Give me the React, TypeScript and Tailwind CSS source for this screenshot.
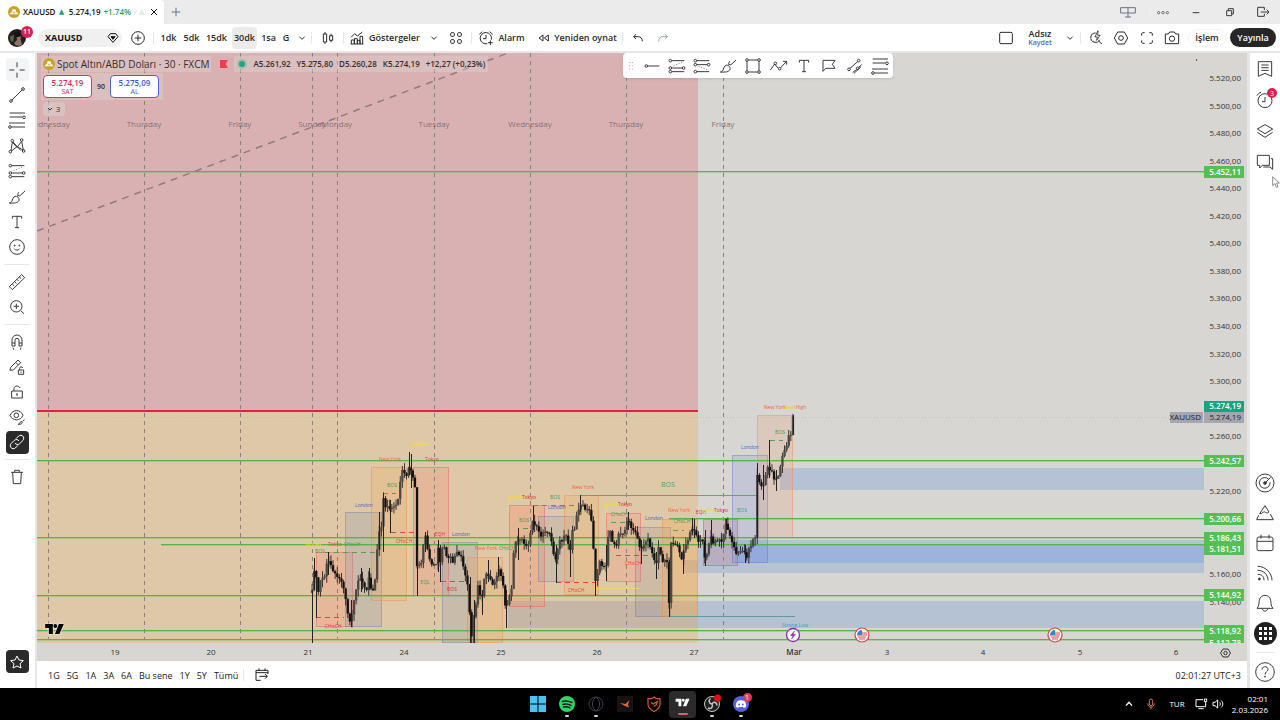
import type { ReactNode } from "react";

type Point = [number, number];

// every glyph is drawn around 0,0 on a 60 unit grid
const Icon = ({ children, className = "" }: { children: ReactNode; className?: string }) => (
  <svg
    viewBox="-30 -30 60 60"
    className={`w-5 h-5 shrink-0 overflow-visible ${className}`}
    fill="none"
    stroke="currentColor"
    strokeWidth="3"
    aria-hidden="true"
  >
    {children}
  </svg>
);

const Chevron = () => (
  <Icon><path d="M-8 -4 L0 4 L8 -4" /></Icon>
);

const FibIcon = () => (
  <Icon>
    <path d="M-22 -21H24M-22 -9H17M-24 9H24M-16 21H24" />
    <circle cx="21" cy="-8" r="4" fill="white" />
    <circle cx="-21" cy="21" r="4" fill="white" />
  </Icon>
);

const LongIcon = () => (
  <Icon>
    <path d="M-16 -16H22M-16 6H16M-16 17H22" />
    <path d="M-10 -1L18 -12" strokeDasharray="3 5" strokeWidth="2" />
    <circle cx="-20" cy="-16" r="4" />
    <circle cx="-20" cy="6" r="4" />
    <circle cx="20" cy="6" r="4" />
    <circle cx="-20" cy="17" r="4" />
  </Icon>
);

const ShortIcon = () => (
  <Icon>
    <path d="M-16 -16H22M-16 -4H16M-16 17H22" />
    <path d="M-10 1L18 12" strokeDasharray="3 5" strokeWidth="2" />
    <circle cx="-20" cy="-16" r="4" />
    <circle cx="-20" cy="-4" r="4" />
    <circle cx="20" cy="-4" r="4" />
    <circle cx="-20" cy="17" r="4" />
  </Icon>
);

const BrushIcon = () => (
  <Icon>
    <path d="M-23 18C-12 18 -16 2 -6 -2C1 -4 8 3 6 10C3 18 -8 19 -23 18Z" />
    <path d="M2 -4C2 -9 4 -14 6 -15M8 -3L24 -18M8 -4L3 -5" />
  </Icon>
);

const TextIcon = () => (
  <Icon>
    <path d="M-14 -10V-17H14V-10M0 -17V17M-6 17H6" />
  </Icon>
);

const TvLogo = ({ className }: { className: string }) => (
  <svg viewBox="0 0 36 22" className={className} fill="currentColor" aria-hidden="true">
    <path d="M0 2H14V20H7V9H0Z" />
    <circle cx="18.5" cy="5.5" r="3.5" />
    <path d="M25 2H34L26 20H18Z" />
  </svg>
);

const GoldIcon = ({ className = "" }: { className?: string }) => (
  <svg viewBox="0 0 36 36" className={`w-3 h-3 shrink-0 ${className}`} aria-hidden="true">
    <circle cx="18" cy="18" r="18" fill="#c9a227" />
    <path d="M14 10H22L25 17H11ZM9 19H16L18 25H5ZM20 19H27L31 25H18Z" fill="white" />
  </svg>
);

const Separator = () => <span className="w-px h-3 bg-gray-200 shrink-0" />;

const days: [number, string][] = [
  [48, "Wednesday"], [144, "Thursday"], [240, "Friday"], [312, "Sunday"], [337, "Monday"],
  [434, "Tuesday"], [530, "Wednesday"], [626, "Thursday"], [723, "Friday"],
];

const dates: [number, string][] = [
  [115, "19"], [211, "20"], [308, "21"], [404, "24"], [501, "25"], [597, "26"],
  [694, "27"], [794, "Mar"], [887, "3"], [983, "4"], [1080, "5"], [1176, "6"],
];

const priceToY = (price: number) => Math.round(78 + (5520 - price) * 1.378);

const formatPrice = (price: number) => {
  const [whole, cents] = price.toFixed(2).split(".");
  return `${whole[0]}.${whole.slice(1)},${cents}`;
};

const ticks = [
  5520, 5500, 5480, 5460, 5440, 5420, 5400, 5380, 5360, 5340, 5320, 5300, 5260, 5220, 5160, 5140,
];

// price, start of the line, y of the line, y of its tag
const levels: [number, number, number, number][] = [
  [5452.11, 37, 172, 172],
  [5242.57, 37, 461, 461],
  [5200.66, 669, 519, 519],
  [5186.43, 37, 538, 538],
  [5181.51, 161, 545, 549],
  [5112.78, 37, 640, 643],
  [5144.92, 37, 596, 595],
  [5118.92, 37, 631, 631],
];

const red = "#e0525a";
const blue = "#6a75a8";
const orange = "#f0804a";

// x, y, width, height, stroke, fill, opacity
const sessions: [number, number, number, number, string, string, number][] = [
  [316, 552, 37, 75, red, "#f49a80", 0.38],
  [345, 512, 37, 115, blue, "#8294ae", 0.24],
  [371, 467, 36, 134, orange, "#f5a85c", 0.24],
  [413, 467, 36, 129, red, "#f08a6c", 0.27],
  [442, 542, 36, 101, blue, "#8294ae", 0.24],
  [467, 557, 36, 86, orange, "#f5a85c", 0.26],
  [509, 505, 36, 102, red, "#f49270", 0.36],
  [538, 516, 36, 66, blue, "#8294ae", 0.2],
  [564, 495, 35, 100, orange, "#f5a85c", 0.24],
  [606, 513, 35, 69, red, "#f49a80", 0.32],
  [635, 527, 36, 90, blue, "#8c86a0", 0.2],
  [662, 519, 36, 98, orange, "#f5a850", 0.3],
  [703, 519, 35, 47, "#cc3e78", "#b98a9c", 0.36],
  [732, 455, 36, 108, "#5b69d4", "#6f7fe4", 0.18],
  [757, 415, 36, 123, orange, "#f09a70", 0.22],
];

const notes: [number, number, string, string, number?][] = [
  [390, 461, "New York", "#f0603a"], [432, 461, "Tokyo", "#e83a3a"], [419, 446, "Sydney", "#f5e000"],
  [392, 487, "BOS", "#4a9a58"], [364, 507, "London", "#5060c0"], [313, 546, "Sydney", "#f5e000"],
  [335, 546, "Tokyo", "#e83a3a"], [352, 546, "CHoCH", "#4a9a58"], [320, 553, "BOS", "#4a9a58"],
  [333, 628, "CHoCH", "#e83a3a"], [404, 543, "CHoCH", "#e83a3a"], [440, 536, "EQH", "#e83a3a"],
  [461, 536, "London", "#5060c0"], [425, 584, "EQL", "#4a9a58"], [452, 591, "BOS", "#d8305a"],
  [486, 550, "New York", "#f0603a"], [507, 550, "CHoCH", "#4a9a58"], [515, 499, "Sydney", "#f5e000"],
  [529, 499, "Tokyo", "#e82020"], [524, 522, "BOS", "#4a9a58"], [555, 499, "BOS", "#4a9a58"],
  [557, 509, "London", "#5060c0"], [583, 489, "New York", "#f0603a"], [576, 592, "CHoCH", "#e83a3a"],
  [611, 506, "Sydney", "#f5e000"], [625, 506, "Tokyo", "#e82020"], [619, 516, "CHoCH", "#4a9a58"],
  [654, 520, "London", "#5060c0"], [633, 565, "CHoCH", "#e83a3a"], [668, 487, "BOS", "#3fa858", 7],
  [679, 512, "New York", "#f0603a"], [682, 523, "CHoCH", "#4a9a58"], [701, 514, "EQH", "#e82060"],
  [710, 512, "Sydney", "#f5e000"], [721, 512, "Tokyo", "#e82060"], [742, 512, "BOS", "#32a890"],
  [750, 449, "London", "#4a62d8"], [775, 409, "New York", "#f0603a"], [790, 409, "Weak", "#f5d000"],
  [801, 409, "High", "#e87060"], [780, 434, "BOS", "#4a9a58"], [795, 627, "Strong Low", "#4a9cae"],
];

// x, y of the close along the session
const closes: Point[] = [
  [312, 593], [314, 573], [316, 573], [318, 597], [320, 583], [323, 577], [325, 573], [328, 557],
  [330, 565], [332, 568], [335, 573], [338, 577], [342, 580], [344, 590], [347, 607], [349, 617],
  [351, 623], [353, 603], [355, 592], [358, 582], [361, 578], [363, 587], [367, 587], [369, 573],
  [371, 590], [374, 593], [376, 567], [378, 540], [380, 525], [382, 525], [383, 498], [385, 505],
  [388, 508], [392, 510], [395, 508], [398, 502], [400, 485], [402, 470], [405, 473], [407, 480],
  [409, 465], [412, 472], [414, 483], [416, 488], [417, 568], [420, 567], [422, 557], [425, 535],
  [427, 550], [430, 560], [433, 565], [436, 563], [438, 547], [440, 563], [442, 547], [444, 543],
  [447, 557], [450, 558], [453, 562], [456, 555], [460, 553], [463, 563], [465, 573], [467, 580],
  [469, 590], [470, 633], [472, 637], [473, 620], [476, 603], [478, 587], [482, 600], [483, 583],
  [486, 572], [489, 575], [493, 583], [496, 577], [498, 567], [502, 577], [504, 597], [506, 607],
  [508, 600], [511, 592], [513, 570], [514, 543], [517, 540], [520, 537], [523, 543], [528, 543],
  [531, 530], [533, 518], [535, 527], [538, 530], [542, 535], [545, 530], [548, 530], [552, 547],
  [556, 562], [558, 545], [562, 540], [565, 533], [568, 545], [570, 550], [572, 530], [575, 527],
  [577, 515], [580, 502], [582, 505], [585, 510], [590, 512], [593, 537], [595, 583], [597, 580],
  [599, 563], [603, 568], [606, 563], [608, 540], [610, 533], [613, 543], [616, 545], [619, 535],
  [623, 532], [626, 527], [628, 520], [631, 525], [633, 530], [637, 537], [640, 547], [643, 547],
  [647, 538], [650, 548], [653, 558], [656, 567], [658, 547], [661, 553], [663, 563], [667, 563],
  [669, 600], [671, 543], [675, 542], [678, 550], [682, 563], [684, 550], [687, 540], [690, 533],
  [692, 527], [694, 530], [697, 540], [700, 538], [703, 543], [705, 558], [708, 555], [710, 530],
  [712, 542], [717, 540], [722, 543], [724, 530], [727, 523], [729, 533], [733, 547], [736, 552],
  [740, 550], [743, 553], [746, 557], [749, 550], [753, 540], [756, 537], [757, 473], [759, 480],
  [762, 488], [765, 482], [767, 467], [769, 467], [772, 472], [775, 480], [779, 477], [781, 460],
  [783, 453], [786, 448], [788, 435], [791, 434], [793, 416],
];

// long shadows: x, top, bottom
const wicks: [number, number, number][] = [
  [312, 590, 643], [314, 558, 590], [316, 575, 618], [328, 552, 575], [351, 600, 627], [361, 568, 592],
  [369, 568, 590], [379, 512, 550], [383, 493, 552], [390, 500, 533], [409, 452, 475], [411, 454, 488],
  [417, 550, 596], [425, 532, 552], [438, 540, 572], [440, 545, 582], [470, 577, 643], [474, 600, 643],
  [482, 590, 615], [488, 560, 582], [498, 557, 577], [506, 590, 628], [518, 528, 560], [533, 506, 530],
  [556, 545, 583], [570, 540, 577], [580, 495, 512], [595, 560, 596], [606, 545, 581], [628, 512, 530],
  [641, 540, 564], [656, 552, 579], [669, 560, 617], [683, 550, 574], [692, 518, 535], [694, 519, 538],
  [705, 530, 566], [711, 520, 545], [726, 519, 530], [745, 545, 563], [757, 463, 538], [763, 465, 500],
  [769, 440, 478], [776, 470, 491], [793, 415, 435],
];

const closeAt = (x: number) => {
  for (let i = 1; i < closes.length; i++) {
    const [x0, y0] = closes[i - 1];
    const [x1, y1] = closes[i];
    if (x <= x1) return y0 + ((x - x0) / (x1 - x0)) * (y1 - y0);
  }
  return closes[closes.length - 1][1];
};

const noise = (n: number) => Math.abs(Math.sin(n * 12.9898) * 43758.5453) % 1;

const candles = Array.from({ length: 230 }, (_, i) => {
  const x = 312 + i * 2.1;
  const open = closeAt(Math.max(312, x - 2.1)) + (noise(i + 9) - 0.5) * 6;
  const close = closeAt(x) + (noise(i + 10) - 0.5) * 6;
  const top = Math.min(open, close);
  const bottom = Math.max(open, close);
  return {
    x,
    top,
    bottom,
    high: top - noise(i * 3 + 1) * 7,
    low: bottom + noise(i * 5 + 2) * 7,
    up: close < open,
  };
});

const UsFlag = ({ x }: { x: number }) => (
  <g>
    <circle cx={x} cy="635" r="7" fill="#fff" stroke="#d8404a" strokeWidth="1.2" />
    <circle cx={x} cy="635" r="5" fill="#f3f3f3" />
    <path d={`M${x - 4} 633H${x + 5}M${x - 5} 635H${x + 5}M${x - 4} 637H${x + 4}M${x - 3} 639H${x + 3}`} stroke="#e05058" strokeWidth="1" />
    <path d={`M${x - 5} 635A5 5 0 0 1 ${x} 630V635Z`} fill="#3b80d8" />
  </g>
);

const Chart = () => (
  <svg
    viewBox="37 53 1210 608"
    preserveAspectRatio="xMaxYMid slice"
    className="w-full h-full block"
    fontFamily='"Open Sans", "Noto Sans", sans-serif'
    role="img"
    aria-label="XAUUSD 30 dk"
  >
    <defs>
      <clipPath id="plot"><rect x="37" y="53" width="1167" height="590" /></clipPath>
      <clipPath id="scale"><rect x="37" y="53" width="1210" height="590" /></clipPath>
    </defs>
    <rect x="37" y="53" width="1210" height="608" fill="#d7d6d2" />
    <g clipPath="url(#plot)">
      <rect x="37" y="53" width="661" height="358" fill="#dab1b3" />
      <rect x="37" y="411" width="661" height="232" fill="#dfc8a8" />
      <rect x="780" y="468" width="424" height="22" fill="#b4c2d4" />
      <rect x="698" y="540" width="506" height="33" fill="#b7c3d3" />
      <rect x="684" y="560" width="14" height="13" fill="#c9b6a5" />
      <rect x="735" y="545" width="469" height="18" fill="#9db3dc" />
      <rect x="508" y="601" width="190" height="27" fill="#c5b6a6" />
      <rect x="698" y="601" width="506" height="27" fill="#b4c2d4" />
      <path d="M313 548V643M408 467V601M509 498V512M606 506V520" stroke="#f3dc7a" strokeOpacity="0.6" />

      {sessions.map(([x, y, w, h, stroke, fill, opacity]) => (
        <g key={`${x}-${y}`}>
          <rect x={x} y={y} width={w} height={h} fill={fill} fillOpacity={opacity} />
          <rect x={x + 0.5} y={y + 0.5} width={w - 1} height={h - 1} fill="none" stroke={stroke} strokeOpacity="0.75" strokeDasharray="1 1" />
        </g>
      ))}

      {days.map(([x, name]) => (
        <g key={x}>
          <path d={`M${x + 0.5} 53V640`} stroke="#8f7d7c" strokeDasharray="4 4" />
          <text x={x} y="127" textAnchor="middle" fontSize="8" fill="#857173">{name}</text>
        </g>
      ))}
      <path d="M37 231L508 53" stroke="#927a7d" strokeWidth="1.5" strokeDasharray="7 6" />
      <path d="M37 417.5H1204" stroke="#b5b0a8" strokeDasharray="1 2" strokeOpacity="0.6" />
      <rect x="37" y="410" width="661" height="2" fill="#dc2640" />

      {levels.map(([price, x, y]) => (
        <g key={price} fill="#57b545">
          <rect x={x} y={y - 1} width={1204 - x} height="1" />
          <rect x={x} y={y} width={1204 - x} height="1" fillOpacity="0.35" />
        </g>
      ))}
      <path d="M581 495.5H757" stroke="#4fb070" />
      <path d="M669 616.5H795" stroke="#5f9c98" />
      <path d="M325 552.5H376M383 493.5H396M523 528.5H530M770 440.5H783M611 522.5H626M673 530.5H684M533 505.5H576" stroke="#5c9a5c" strokeDasharray="5 4" />
      <path d="M316 617.5H344M391 532.5H416M441 581.5H467M556 582.5H596M616 555.5H655" stroke="#e0444a" strokeDasharray="5 4" />
      <path d="M598 588.5H640" stroke="#f3dc50" strokeOpacity="0.7" />

      {candles.map((c) => (
        <g key={c.x}>
          <rect x={c.x - 0.4} y={c.high} width="0.9" height={c.low - c.high} fill="#2c2724" />
          <rect x={c.x - 1.1} y={c.top} width="2.3" height={Math.max(1, c.bottom - c.top)} fill={c.up ? "#4c4844" : "#111"} />
        </g>
      ))}
      {wicks.map(([x, top, bottom]) => (
        <path key={`${x}-${top}`} d={`M${x + 0.5} ${top}V${bottom}`} stroke="#26211f" />
      ))}

      {notes.map(([x, y, label, color, size]) => (
        <text key={`${x}-${y}`} x={x} y={y} textAnchor="middle" fontSize={size ?? 5} fill={color}>{label}</text>
      ))}
    </g>

    <circle cx="793" cy="635" r="6.5" fill="#fff" stroke="#8a2aa8" strokeWidth="1.3" />
    <path d="M794.5 631L790.5 635.5H793L791.5 639L795.5 634.5H793Z" fill="#8a2aa8" stroke="#8a2aa8" strokeWidth="0.5" />
    <UsFlag x={862} />
    <UsFlag x={1055} />

    <g clipPath="url(#scale)" fontSize="8" textAnchor="end">
      <circle cx="1196.5" cy="60" r="0.7" fill="#222" />
      {ticks.map((price) => (
        <text key={price} x="1241" y={priceToY(price) + 3} fill="#333">{formatPrice(price)}</text>
      ))}
      {levels.map(([price, , , y]) => (
        <g key={price} fontWeight="600">
          <rect x="1204" y={y - 6} width="40" height="12" fill="#55bf54" />
          <text x="1241" y={y + 3} fill="#fff">{formatPrice(price)}</text>
        </g>
      ))}
      <rect x="1204" y="401" width="40" height="11" fill="#12a583" />
      <text x="1241" y="409" fill="#fff" fontWeight="600">5.274,19</text>
      <rect x="1170" y="412" width="33" height="11" fill="#a5a6ae" />
      <text x="1201" y="420" fill="#22242c">XAUUSD</text>
      <rect x="1204" y="412" width="40" height="11" fill="#a5a6ae" />
      <text x="1241" y="420" fill="#22242c">5.274,19</text>
    </g>

    <g fontSize="8" fill="#333" textAnchor="middle">
      {dates.map(([x, label]) => (
        <text key={label} x={x} y="655" fontWeight={label === "Mar" ? 600 : 400}>{label}</text>
      ))}
    </g>
    <path d="M1223 649H1228L1230.5 653L1228 657H1223L1220.5 653Z" fill="none" stroke="#333" />
    <circle cx="1225.5" cy="653" r="1.7" fill="none" stroke="#333" />
  </svg>
);

const ToolButton = ({ label, dark = false, active = false, children }: { label: string; dark?: boolean; active?: boolean; children: ReactNode }) => (
  <button aria-label={label} className="flex flex-1 items-center justify-center">
    <span
      className={`flex w-[23px] h-[23px] items-center justify-center rounded ${dark ? "bg-[#2a2a2a] text-white" : ""} ${active ? "bg-gray-100" : ""}`}
    >
      {children}
    </span>
  </button>
);

const LeftToolbar = () => (
  <nav aria-label="Çizim araçları" className="flex w-[35px] shrink-0 flex-col bg-white pt-1 pr-px text-[#3a3a3a]">
    <div className="flex h-[203px] flex-col">
      <ToolButton label="İmleç" active>
        <Icon><path d="M0 -23V-8M0 8V23M-23 0H-8M8 0H23" /></Icon>
      </ToolButton>
      <ToolButton label="Trend çizgisi">
        <Icon><path d="M-15 15L15 -15" /><circle cx="-18" cy="18" r="4" /><circle cx="18" cy="-18" r="4" /></Icon>
      </ToolButton>
      <ToolButton label="Fibonacci"><FibIcon /></ToolButton>
      <ToolButton label="Formasyonlar">
        <Icon>
          <path d="M-18 14L-14 -12L0 4L14 -14L19 12L0 2L-18 16M-12 -12L12 14" />
          <circle cx="-20" cy="17" r="4" /><circle cx="-14" cy="-16" r="4" /><circle cx="14" cy="-18" r="4" /><circle cx="20" cy="15" r="4" />
        </Icon>
      </ToolButton>
      <ToolButton label="Tahmin"><LongIcon /></ToolButton>
      <ToolButton label="Fırça"><BrushIcon /></ToolButton>
      <ToolButton label="Metin"><TextIcon /></ToolButton>
      <ToolButton label="Simgeler">
        <Icon>
          <circle r="22" /><path d="M-8 5C-5 11 5 11 8 5" />
          <circle cx="-7" cy="-4" r="1.5" /><circle cx="7" cy="-4" r="1.5" />
        </Icon>
      </ToolButton>
    </div>
    <hr className="mx-1 my-1 border-gray-200" />
    <div className="flex h-[51px] flex-col">
      <ToolButton label="Ölçü">
        <Icon>
          <path d="M-23 14L14 -22L23 -13L-14 23ZM-14 6L-9 11M-7 -1L-2 4M0 -8L5 -3M7 -15L12 -10" />
        </Icon>
      </ToolButton>
      <ToolButton label="Yakınlaştır">
        <Icon><circle cx="-2" cy="-2" r="17" /><path d="M11 11L21 20M-10 -2H6M-2 -10V6" /></Icon>
      </ToolButton>
    </div>
    <hr className="mx-1 my-1 border-gray-200" />
    <div className="flex h-[126px] flex-col">
      <ToolButton label="Mıknatıs">
        <Icon>
          <path d="M-15 12V-6A15 15 0 0 1 15 -6V12H6V-5A6 6 0 0 0 -6 -5V12ZM-15 3H-6M6 3H15M-12 17L-10 23M12 17L10 23" />
        </Icon>
      </ToolButton>
      <ToolButton label="Çizim modunda kal">
        <Icon>
          <path d="M-21 10L-19 1L3 -21L11 -13L-11 9ZM-4 -14L4 -6M4 9H20V22H4ZM8 9V4C8 -2 16 -2 17 3" />
          <path d="M12 14V18" />
        </Icon>
      </ToolButton>
      <ToolButton label="Kilitle">
        <Icon><path d="M-16 -3H16V18H-16ZM-9 -3V-10C-9 -20 7 -20 9 -12" /><path d="M0 4V11" strokeWidth="4" /></Icon>
      </ToolButton>
      <ToolButton label="Gizle">
        <Icon>
          <path d="M-21 -5C-12 -24 10 -24 18 -5C10 13 -12 13 -21 -5Z" /><circle cx="-2" cy="-5" r="7" />
          <path d="M4 22C8 22 8 13 15 14C18 20 10 23 4 22ZM17 13L23 8" />
        </Icon>
      </ToolButton>
      <ToolButton label="Bağla" dark>
        <Icon>
          <path d="M-3 -10L5 -18C14 -25 25 -14 18 -5L8 5C3 9 -3 8 -6 3M3 10L-5 18C-14 25 -25 14 -18 5L-8 -5C-3 -9 3 -8 6 -3" />
        </Icon>
      </ToolButton>
    </div>
    <hr className="mx-1 my-1 border-gray-200" />
    <div className="flex h-[26px] flex-col">
      <ToolButton label="Sil">
        <Icon><path d="M-18 -14H18M-7 -14V-20H7V-14M-13 -14L-11 20H11L13 -14" /></Icon>
      </ToolButton>
    </div>
    <div className="mt-auto mb-3.5 flex h-[25px] flex-col">
      <ToolButton label="Favoriler" dark>
        <Icon><path d="M0 -18L6 -6L19 -4L9 5L12 18L0 12L-12 18L-9 5L-19 -4L-6 -6Z" /></Icon>
      </ToolButton>
    </div>
  </nav>
);

const SideButton = ({ label, children }: { label: string; children: ReactNode }) => (
  <button aria-label={label} className="relative flex h-[30px] w-full items-center justify-center">{children}</button>
);

const RightSidebar = () => (
  <aside className="flex w-[30px] shrink-0 flex-col bg-white pt-px text-[#3a3a3a]">
    <div className="flex flex-col gap-px">
      <SideButton label="İzleme listesi">
        <Icon><path d="M-20 -22H20V22L0 13L-20 22ZM-11 -12H11M-11 -4H11M-11 4H11" /></Icon>
      </SideButton>
      <SideButton label="Alarmlar">
        <Icon><circle cy="2" r="21" /><path d="M0 -9V5H-9M-24 -13C-22 -18 -17 -22 -12 -23" /></Icon>
        <span className="absolute right-[3px] top-[3px] flex h-[10px] w-[10px] items-center justify-center rounded-full bg-[#d8204c] text-[7px] text-white">3</span>
      </SideButton>
      <SideButton label="Nesne ağacı">
        <Icon><path d="M0 -19L23 -6L0 8L-23 -6ZM-23 4L0 19L23 4" /></Icon>
      </SideButton>
      <SideButton label="Sohbetler">
        <Icon><path d="M-23 -20H13V10H-8L-16 18V10H-23ZM18 -10H23V22L15 15H-5" /></Icon>
      </SideButton>
    </div>
    <div className="mt-auto flex flex-col pb-px">
      <SideButton label="Tarayıcılar">
        <Icon><circle r="27" /><path d="M11 -11A16 16 0 1 0 15 -2M0 0L17 -17" /><circle r="4" fill="currentColor" /></Icon>
      </SideButton>
      <SideButton label="Pine">
        <Icon><path d="M0 -22L12 -3C6 5 2 -5 -4 -3C-9 -2 -9 3 -16 2ZM-19 7L-25 20H25L16 3" /></Icon>
      </SideButton>
      <SideButton label="Takvim">
        <Icon><rect x="-24" y="-18" width="48" height="41" rx="6" /><path d="M-24 -5H24M-12 -25V-13M12 -25V-13" /></Icon>
      </SideButton>
      <SideButton label="Haber akışı">
        <Icon>
          <circle cx="-17" cy="18" r="3" fill="currentColor" />
          <path d="M-22 4C-10 4 -3 10 -3 22M-22 -8C-4 -8 9 5 9 22M-22 -20C2 -20 21 0 21 22" />
        </Icon>
      </SideButton>
      <SideButton label="Bildirimler">
        <Icon><path d="M-24 16C-16 8 -19 -1 -17 -8C-14 -28 14 -28 17 -8C19 -1 16 8 24 16ZM-8 17C-7 27 7 27 8 17" /></Icon>
      </SideButton>
      <SideButton label="Ürünler">
        <span className="grid h-[23px] w-[23px] grid-cols-3 place-content-center gap-[2px] rounded-full bg-[#202020] px-[5px]">
          {Array.from({ length: 9 }, (_, i) => <span key={i} className="h-[3px] w-[3px] bg-white" />)}
        </span>
      </SideButton>
      <hr className="mx-1.5 my-1 border-gray-200" />
      <SideButton label="Yardım">
        <Icon><circle r="28" /><path d="M-9 -7C-9 -19 10 -19 9 -7C8 0 0 -1 0 8" /><circle cy="14" r="1.5" fill="currentColor" /></Icon>
      </SideButton>
    </div>
  </aside>
);

const TitleBar = () => (
  <header className="flex h-6 shrink-0 items-stretch bg-[#ebebeb] text-[#3a3a3a]">
    <div className="flex w-[164px] items-center rounded-tr bg-white pl-2 text-[8px]">
      <GoldIcon />
      <span className="ml-[3px] font-semibold text-[#111]">XAUUSD</span>
      <svg viewBox="0 0 6 6" className="ml-1 h-1.5 w-1.5" fill="#1f9d76" aria-hidden="true"><path d="M3 0L6 6H0Z" /></svg>
      <span className="ml-1 font-semibold text-[#222]">5.274,19</span>
      <span className="ml-[3px] font-semibold text-[#1f9d76]">+1.74%</span>
      <span className="ml-[3px] whitespace-nowrap text-gray-300">/ A</span>
      <button aria-label="Sekmeyi kapat" className="ml-auto text-[#111]">
        <Icon><path d="M-9 -9L9 9M9 -9L-9 9" /></Icon>
      </button>
    </div>
    <button aria-label="Yeni sekme" className="flex w-[23px] items-center justify-center text-gray-500">
      <Icon><path d="M-13 0H13M0 -13V13" /></Icon>
    </button>
    <div className="ml-auto flex items-center">
      <button aria-label="Bağlantı" className="flex w-9 justify-center text-gray-500">
        <Icon><path d="M-22 -13H22V3H-22ZM0 -13V15M-9 15H9" /></Icon>
      </button>
      <Separator />
      <button aria-label="Menü" className="flex w-8 justify-center">
        <Icon><circle cx="-13" cy="2" r="3.5" strokeWidth="2" /><circle cy="2" r="3.5" strokeWidth="2" /><circle cx="13" cy="2" r="3.5" strokeWidth="2" /></Icon>
      </button>
      <button aria-label="Küçült" className="flex w-[34px] justify-center"><Icon><path d="M-10 2H10" /></Icon></button>
      <button aria-label="Büyüt" className="flex w-[33px] justify-center">
        <Icon><path d="M-10 -4H5V11H-10ZM-5 -4V-10H10V6H5" /></Icon>
      </button>
      <button aria-label="Çıkış" className="flex w-[34px] justify-center">
        <Icon><path d="M4 -6V-14H-16V13H4V5M-7 0H18M11 -7L18 0L11 7" /></Icon>
      </button>
    </div>
  </header>
);

const headerButton = "flex h-[22px] shrink-0 items-center justify-center rounded";

const MainToolbar = () => (
  <div className="flex h-[27px] shrink-0 items-center bg-white text-[9px] font-semibold text-[#2a2a2a]">
    <button aria-label="Profil" className="relative flex w-[38px] shrink-0 items-center pl-2">
      <svg viewBox="0 0 36 36" className="h-[18px] w-[18px]" aria-hidden="true">
        <circle cx="18" cy="18" r="18" fill="#241c1a" />
        <path d="M17 10C25 8 28 15 25 20L28 31C20 36 14 33 12 28L18 22Z" fill="#8c7468" />
        <path d="M13 7C20 3 28 9 25 15L15 17Z" fill="#111" />
        <path d="M4 15L12 12L11 25L5 25Z" fill="#49664e" />
      </svg>
      <span className="absolute -top-[3px] left-[21px] flex h-3 w-3 items-center justify-center rounded-full bg-[#d8204c] text-[7px] text-white">11</span>
    </button>
    <button className="flex h-[18px] w-[84px] shrink-0 items-center justify-between rounded-full bg-[#f0f0f0] pl-[7px] font-bold text-[#111]">
      XAUUSD
      <Icon className="-mr-px"><path d="M-8 -13H8L15 -4L0 13L-15 -4Z" /><path d="M-6 -4H6L0 4Z" fill="currentColor" /></Icon>
    </button>
    <button aria-label="Sembol ekle" className={`${headerButton} w-[31px]`}>
      <Icon><circle r="19" /><path d="M-10 0H10M0 -10V10" /></Icon>
    </button>
    <Separator />
    <button className={`${headerButton} ml-[3px] w-[23px]`}>1dk</button>
    <button className={`${headerButton} w-[23px]`}>5dk</button>
    <button className={`${headerButton} mr-0.5 w-[27px]`}>15dk</button>
    <button className={`${headerButton} w-[25px] bg-[#ebebeb]`}>30dk</button>
    <button className={`${headerButton} w-[23px]`}>1sa</button>
    <button className={`${headerButton} w-3`}>G</button>
    <button aria-label="Zaman aralığı" className={`${headerButton} w-[19px]`}><Chevron /></button>
    <Separator />
    <button aria-label="Mum tipi" className={`${headerButton} w-[31px]`}>
      <Icon><path d="M-14 -12H-4V12H-14ZM-9 -18V-12M-9 12V18M5 -7H14V7H5ZM9 -13V-7M9 7V13" /></Icon>
    </button>
    <Separator />
    <button className={`${headerButton} w-[79px] gap-0.5`}>
      <Icon><path d="M-17 18V6H-8V18M-8 18V2H1V18M1 18V7H9V18M9 18V-5H17V18M-19 18H19M-18 -2L-7 -13L1 -6L16 -18" /></Icon>
      Göstergeler
    </button>
    <button aria-label="Favori göstergeler" className={`${headerButton} w-[22px]`}><Chevron /></button>
    <button aria-label="Şablonlar" className={`${headerButton} w-[22px]`}>
      <Icon>
        <rect x="-16" y="-16" width="11" height="11" rx="3" /><rect x="5" y="-16" width="11" height="11" rx="3" />
        <rect x="-16" y="5" width="11" height="11" rx="3" /><rect x="5" y="5" width="11" height="11" rx="3" />
      </Icon>
    </button>
    <span className="ml-1" />
    <Separator />
    <button className={`${headerButton} w-[57px] gap-0.5`}>
      <Icon><path d="M16 5A17 17 0 1 0 4 17M0 -9V2H-9M-20 -11L-11 -19M11 -19L20 -11M13 7V21M6 14H20" /></Icon>
      Alarm
    </button>
    <button className={`${headerButton} w-[93px]`}>
      <Icon><path d="M-3 -9L-15 0L-3 9ZM13 -9L1 0L13 9Z" /></Icon>
      Yeniden oynat
    </button>
    <Separator />
    <button aria-label="Geri al" className={`${headerButton} w-[29px]`}><Icon><path d="M-6 -11L-13 -4L-6 3M-13 -4H1C8 -4 13 1 13 10" /></Icon></button>
    <button aria-label="Yinele" className={`${headerButton} w-[22px] text-gray-400`}><Icon><path d="M6 -11L13 -4L6 3M13 -4H-1C-8 -4 -13 1 -13 10" /></Icon></button>

    <div className="ml-auto flex shrink-0 items-center pr-1">
      <button aria-label="Düzen" className={`${headerButton} w-7`}><Icon><rect x="-19" y="-17" width="38" height="34" rx="4" /></Icon></button>
      <button className="w-10 text-[9px] leading-[10px]">
        Adsız
        <span className="block text-[7px] leading-[8px] text-[#4a6ad8]">Kaydet</span>
      </button>
      <button aria-label="Düzenler" className={`${headerButton} w-5`}><Chevron /></button>
      <Separator />
      <button aria-label="Hızlı arama" className={`${headerButton} ml-0.5 w-[25px]`}>
        <Icon><path d="M-1 -15A14 14 0 1 0 11 5M8 9L18 18" /><path d="M6 -22L-3 -3H4L2 7L12 -8H5Z" strokeWidth="2.5" /></Icon>
      </button>
      <button aria-label="Ayarlar" className={`${headerButton} w-[26px]`}>
        <Icon><path d="M-10 -18H10L20 0L10 18H-10L-20 0Z" /><circle r="7" /></Icon>
      </button>
      <button aria-label="Tam ekran" className={`${headerButton} w-[25px]`}>
        <Icon><path d="M-16 -7V-12C-16 -15 -14 -16 -12 -16H-7M7 -16H12C15 -16 16 -14 16 -12V-7M16 7V12C16 15 14 16 12 16H7M-7 16H-12C-15 16 -16 14 -16 12V7" /></Icon>
      </button>
      <button aria-label="Ekran görüntüsü" className={`${headerButton} w-[25px]`}>
        <Icon><path d="M-20 -12H-11L-7 -18H7L11 -12H20V17H-20Z" /><circle cy="2" r="8" /></Icon>
      </button>
      <button className="ml-1 h-[18px] w-[38px] rounded-full border border-gray-100">İşlem</button>
      <button className="ml-1 h-[19px] w-[46px] rounded-full bg-[#262626] text-white">Yayınla</button>
    </div>
  </div>
);

const Legend = () => (
  <div className="absolute left-1 top-[3px] flex flex-col items-start text-[#3a2c2e]">
    <div className="flex h-4 items-center gap-1">
      <div className="flex h-full items-center gap-0.5 bg-[#d7d6d2]/40 px-0.5">
        <GoldIcon />
        <span className="text-[10px] font-medium">Spot Altın/ABD Doları · 30 · FXCM</span>
      </div>
      <svg viewBox="0 0 24 24" className="ml-[5px] h-2 w-2" fill="#ef3f4f" aria-hidden="true"><path d="M0 0H24L17 12L24 24H0Z" /></svg>
      <div className="ml-0.5 flex h-full items-center bg-[#d7d6d2]/40 px-[3px]">
        <span className="mr-1.5 flex h-2.5 w-2.5 items-center justify-center rounded-full bg-[#1fa97a]/25">
          <span className="h-1.5 w-1.5 rounded-full bg-[#1fa97a]" />
        </span>
        <span className="flex gap-1.5 text-[8px] font-semibold">
          <span>A5.261,92</span><span>Y5.275,80</span><span>D5.260,28</span><span>K5.274,19</span><span>+12,27 (+0,23%)</span>
        </span>
      </div>
    </div>
    <div className="mt-px flex h-[27px] items-center bg-[#d7d6d2]/40 pl-0.5 pr-1">
      <button className="h-[23px] w-[49px] rounded border border-[#cf3d5e] bg-white text-[8px] font-semibold leading-[10px] text-[#cf2f55]">
        5.274,19<span className="block text-[7px] font-normal leading-[8px]">SAT</span>
      </button>
      <span className="w-[18px] text-center text-[7px] font-semibold">90</span>
      <button className="h-[23px] w-[49px] rounded border border-[#4a68d0] bg-white text-[8px] font-semibold leading-[10px] text-[#3c5cd0]">
        5.275,09<span className="block text-[7px] font-normal leading-[8px]">AL</span>
      </button>
    </div>
    <button className="ml-0.5 mt-0.5 flex h-[14px] w-[22px] items-center justify-center rounded-sm bg-[#d7d6d2]/50 pr-1 text-[8px]">
      <Icon className="-mx-1"><path d="M-6 -3L0 3L6 -3" /></Icon>3
    </button>
  </div>
);

const FavoriteTools = () => (
  <div className="absolute right-[354px] top-0 flex h-[25px] w-[270px] items-center rounded bg-white text-[#3a3a3a] shadow">
    <span className="flex w-4 justify-center text-gray-400">
      <Icon><path d="M-4 -12V12M4 -12V12" strokeDasharray="3 7" /></Icon>
    </span>
    <div className="grid flex-1 grid-cols-10 justify-items-center">
      <button aria-label="Yatay ışın"><Icon><circle cx="-17" r="4" /><path d="M-13 0H22" /></Icon></button>
      <button aria-label="Uzun pozisyon"><LongIcon /></button>
      <button aria-label="Kısa pozisyon"><ShortIcon /></button>
      <button aria-label="Fırça aracı"><BrushIcon /></button>
      <button aria-label="Dikdörtgen">
        <Icon>
          <path d="M-14 -18H14M-18 -14V14M18 -14V14M-14 18H14" />
          <circle cx="-18" cy="-18" r="4" /><circle cx="18" cy="-18" r="4" /><circle cx="-18" cy="18" r="4" /><circle cx="18" cy="18" r="4" />
        </Icon>
      </button>
      <button aria-label="Yol">
        <Icon><path d="M-26 12L-13 -6L-3 6M5 5L22 -13M12 -14H23V-4" /><circle cx="-11" cy="-8" r="4" /><circle cx="2" cy="8" r="4" /></Icon>
      </button>
      <button aria-label="Metin aracı"><TextIcon /></button>
      <button aria-label="Bayrak"><Icon><path d="M-18 16V-17H18L10 -5L18 7H-10L-18 16" /></Icon></button>
      <button aria-label="Paralel kanal">
        <Icon><path d="M-15 7L8 -13M-7 20L5 10M11 4L20 -4M-3 22L18 2" /><circle cx="-18" cy="10" r="4" /><circle cx="11" cy="-16" r="4" /><circle cx="8" cy="7" r="4" /></Icon>
      </button>
      <button aria-label="Fibonacci düzeltmesi"><FibIcon /></button>
    </div>
  </div>
);

const BottomBar = () => (
  <div className="flex h-[27px] shrink-0 items-center bg-white pl-[9px] pr-1.5 pt-px text-[9px] text-[#222]">
    {["1G", "5G", "1A", "3A", "6A", "Bu sene", "1Y", "5Y", "Tümü"].map((range) => (
      <button key={range} className="mr-[3px] px-0.5">{range}</button>
    ))}
    <Separator />
    <button aria-label="Tarihe git" className="ml-2">
      <Icon><path d="M18 -3V-14H-18V16H-4M-18 -7H18M-9 -20V-12M9 -20V-12M-8 4H16M9 -3L16 4L9 11" /></Icon>
    </button>
    <button className="ml-auto">02:01:27 UTC+3</button>
  </div>
);

const AppSlot = ({ label, running = false, children }: { label: string; running?: boolean; children: ReactNode }) => (
  <button aria-label={label} className="flex h-8 w-[29px] flex-col items-center justify-center pt-1">
    {children}
    <span className={`mt-[3px] h-[2px] w-1 rounded ${running ? "bg-gray-300" : ""}`} />
  </button>
);

const Taskbar = () => (
  <footer className="grid h-8 shrink-0 grid-cols-[1fr_auto_1fr] items-center bg-black text-[9px] text-white">
    <div />
    <div className="flex pr-0.5">
      <AppSlot label="Başlat">
        <svg viewBox="0 0 32 32" className="h-4 w-4" fill="#4cc2f5"><path d="M0 0H15V15H0ZM17 0H32V15H17ZM0 17H15V32H0ZM17 17H32V32H17Z" /></svg>
      </AppSlot>
      <AppSlot label="Spotify" running>
        <svg viewBox="0 0 32 32" className="h-4 w-4" fill="none" stroke="#0c2012" strokeWidth="3" strokeLinecap="round">
          <circle cx="16" cy="16" r="16" fill="#2fd566" stroke="none" />
          <path d="M7 11C13 9 20 10 26 13M8 17C13 15 19 16 24 19M9 22C13 21 18 21 22 24" />
        </svg>
      </AppSlot>
      <AppSlot label="Opera" running>
        <svg viewBox="0 0 32 32" className="h-4 w-4" fill="none" stroke="#39424f" strokeWidth="2">
          <circle cx="16" cy="16" r="14" /><ellipse cx="16" cy="16" rx="7" ry="13" />
        </svg>
      </AppSlot>
      <AppSlot label="Oyun">
        <svg viewBox="0 0 32 32" className="h-4 w-4"><path d="M0 0H32V32H0Z" fill="#141414" /><path d="M6 14L17 16L25 8L22 17L24 23L16 20Z" fill="#e0683a" /></svg>
      </AppSlot>
      <AppSlot label="Güvenlik">
        <svg viewBox="0 0 32 32" className="h-4 w-4" fill="none" stroke="#d9562a" strokeWidth="2.5">
          <path d="M16 2L20 5H28V17C27 24 22 28 16 31C10 28 5 24 4 17V5H12ZM10 13L14 16L23 11L20 18L15 21" />
        </svg>
      </AppSlot>
      <button aria-label="TradingView" className="mx-px flex h-[27px] w-[27px] flex-col items-center justify-center self-center rounded bg-[#2b2b2b]">
        <TvLogo className="mt-1 h-[9px] w-4 text-white" />
        <span className="mt-1.5 h-[2px] w-2.5 rounded bg-[#d8607a]" />
      </button>
      <AppSlot label="OBS" running>
        <svg viewBox="0 0 32 32" className="h-4 w-4 overflow-visible" fill="none" stroke="#c8c8c8" strokeWidth="2">
          <circle cx="16" cy="16" r="15" fill="#222" /><path d="M16 16C9 15 9 8 13 5M16 16C20 10 26 13 26 19M16 16C19 22 14 27 8 24" strokeWidth="3" />
          <circle cx="27" cy="4" r="7" fill="#e01010" stroke="none" />
        </svg>
      </AppSlot>
      <AppSlot label="Discord" running>
        <span className="relative">
          <svg viewBox="0 0 32 32" className="h-4 w-4">
            <circle cx="16" cy="16" r="16" fill="#5563e0" />
            <path d="M9 10C13 8 19 8 23 10C26 14 27 18 26 22C23 24 21 24 20 22H12C11 24 9 24 6 22C5 18 6 14 9 10Z" fill="white" />
            <circle cx="12.5" cy="17" r="2" fill="#5563e0" /><circle cx="19.5" cy="17" r="2" fill="#5563e0" />
          </svg>
          <span className="absolute -right-[3px] -top-[3px] flex h-[9px] w-[9px] items-center justify-center rounded-full bg-[#d84058] text-[7px]">1</span>
        </span>
      </AppSlot>
    </div>
    <div className="flex items-center justify-end pr-3">
      <button aria-label="Gizli simgeler"><Icon><path d="M-9 5L0 -5L9 5" strokeWidth="4" /></Icon></button>
      <span className="flex w-6 justify-center text-[#d07070]">
        <Icon><rect x="-5" y="-15" width="10" height="20" rx="5" /><path d="M-10 -2C-10 13 10 13 10 -2M0 9V16" /></Icon>
      </span>
      <span className="w-7 text-center text-[8px]">TUR</span>
      <Icon><path d="M6 -13H-15V8H14V0M-8 14H8M10 -15H17V-7H10ZM14 -7V2" /></Icon>
      <Icon className="-ml-[3px]"><path d="M-15 -5H-9L-1 -12V12L-9 5H-15ZM5 -5C8 -2 8 2 5 5M10 -10C16 -4 16 4 10 10" /></Icon>
      <span className="w-10 whitespace-nowrap text-right text-[8px] leading-[11px]">02:01<br />2.03.2026</span>
    </div>
  </footer>
);

export default function App() {
  return (
    <div className="relative flex h-screen flex-col overflow-hidden bg-[#e6e6e6] font-['Open_Sans','Noto_Sans',sans-serif] leading-none">
      <TitleBar />
      <MainToolbar />
      <div className="mt-0.5 flex min-h-0 flex-1">
        <LeftToolbar />
        <main className="ml-0.5 mr-[3px] flex min-w-0 flex-1 flex-col">
          <div className="relative min-h-0 flex-1 overflow-hidden">
            <Chart />
            <Legend />
            <FavoriteTools />
            <TvLogo className="absolute bottom-[26px] left-2 h-3 w-5 text-black drop-shadow-[0_0_1px_white]" />
          </div>
          <BottomBar />
        </main>
        <RightSidebar />
      </div>
      <Taskbar />
      <svg viewBox="0 0 24 36" className="pointer-events-none absolute right-0 top-[176px] h-3 w-2" fill="white" stroke="#555" strokeWidth="2" aria-hidden="true">
        <path d="M2 2V29L9 23L13 34L18 32L14 21H22Z" />
      </svg>
    </div>
  );
}
